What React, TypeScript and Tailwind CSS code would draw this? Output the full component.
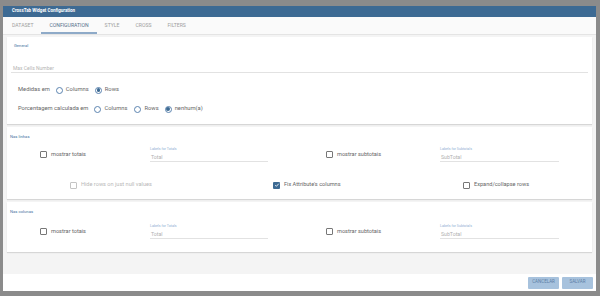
import React from "react";

const tabs = ["DATASET", "CONFIGURATION", "STYLE", "CROSS", "FILTERS"];

function Radio({ checked }: { checked?: boolean }) {
  return (
    <span className="flex h-[7px] w-[7px] shrink-0 items-center justify-center rounded-full border border-[#5b84b0] bg-white">
      {checked && <span className="h-[3.5px] w-[3.5px] rounded-full bg-[#3d6a93]" />}
    </span>
  );
}

function Check({ checked, disabled }: { checked?: boolean; disabled?: boolean }) {
  if (checked) {
    return (
      <span className="flex h-[7px] w-[7px] shrink-0 items-center justify-center rounded-[1px] bg-[#3d6a93]">
        <svg viewBox="0 0 10 10" className="h-[6px] w-[6px]">
          <path d="M2 5.2l2 2 4-4.4" fill="none" stroke="white" strokeWidth="1.4" />
        </svg>
      </span>
    );
  }
  return (
    <span
      className={`h-[7px] w-[7px] shrink-0 rounded-[1px] border bg-white ${
        disabled ? "border-[#c4c4c4]" : "border-[#777]"
      }`}
    />
  );
}

function CheckLabel({ label, checked, disabled }: { label: string; checked?: boolean; disabled?: boolean }) {
  return (
    <div className="flex h-[8px] items-center gap-[4px]">
      <Check checked={checked} disabled={disabled} />
      <span className={`text-[5.6px] leading-none ${disabled ? "text-[#b8b8b8]" : "text-[#666]"}`}>{label}</span>
    </div>
  );
}

function Field({ label, value, width }: { label: string; value: string; width: string }) {
  return (
    <div className={`flex flex-col ${width}`}>
      <span className="h-[4px] text-[3.6px] leading-[4px] text-[#8fb0d3]">{label}</span>
      <span className="mt-[3px] h-[8px] border-b border-[#e2e2e2] pl-[1px] text-[5.2px] leading-[7px] text-[#b0b0b0]">
        {value}
      </span>
    </div>
  );
}

function Title({ children }: { children: React.ReactNode }) {
  return <div className="h-[4px] pl-[3px] text-[4.2px] leading-[4px] text-[#4a76a3]">{children}</div>;
}

function TotalsRow() {
  return (
    <div className="grid grid-cols-[143px_176px_114px_1fr] items-center">
      <div className="pl-[33px]">
        <CheckLabel label="mostrar totais" />
      </div>
      <Field label="Labels for Totals" value="Total" width="w-[118px]" />
      <div>
        <CheckLabel label="mostrar subtotais" />
      </div>
      <Field label="Labels for Subtotals" value="SubTotal" width="w-[119px]" />
    </div>
  );
}

export default function App() {
  return (
    <div className="h-[296px] w-[600px] overflow-hidden bg-[#8b8b8b] pl-[3px] pt-[6px] font-[Roboto,'Liberation_Sans',sans-serif]">
      <div className="flex h-[285px] w-[593px] flex-col bg-white">
        <div className="flex h-[11px] items-center bg-[#3d6a93] pl-[9px] text-[4.5px] font-bold leading-none text-white">
          CrossTab Widget Configuration
        </div>

        <div className="flex h-[18px] border-b border-[#e4e4e4] bg-[#fafafa] pl-[1px]">
          {tabs.map((t) => (
            <div
              key={t}
              className={`flex items-center border-b-2 px-[8px] pt-[2px] text-[5.1px] leading-none ${
                t === "CONFIGURATION"
                  ? "border-[#8eaac8] text-[#55708a]"
                  : "border-transparent text-[#a0a0a0]"
              }`}
            >
              {t}
            </div>
          ))}
        </div>

        <div className="flex flex-1 flex-col gap-[3px] bg-[#f4f4f4] px-[4px] pt-[2px]">
          <div className="h-[87px] bg-white px-[4px] pt-[7px] shadow-[0_1px_1px_rgba(0,0,0,0.12)]">
            <Title>General</Title>
            <div className="mt-[16px] h-[9px] border-b border-[#e2e2e2] pl-[2px] text-[5px] leading-[8px] text-[#b5b5b5]">
              Max Cells Number
            </div>
            <div className="ml-[7px] mt-[13px] flex h-[8px] items-center text-[5.8px] leading-none text-[#666]">
              <span>Medidas em</span>
              <span className="ml-[6px]"><Radio /></span>
              <span className="ml-[3px]">Columns</span>
              <span className="ml-[6px]"><Radio checked /></span>
              <span className="ml-[3px]">Rows</span>
            </div>
            <div className="ml-[7px] mt-[11px] flex h-[8px] items-center text-[5.8px] leading-none text-[#666]">
              <span>Porcentagem calculada em</span>
              <span className="ml-[6px]"><Radio /></span>
              <span className="ml-[3px]">Columns</span>
              <span className="ml-[7px]"><Radio /></span>
              <span className="ml-[3px]">Rows</span>
              <span className="ml-[6px]"><Radio checked /></span>
              <span className="ml-[3px]">nenhum(a)</span>
            </div>
          </div>

          <div className="h-[72px] bg-white pt-[8px] shadow-[0_1px_1px_rgba(0,0,0,0.12)]">
            <Title>Nas linhas</Title>
            <div className="mt-[8px]">
              <TotalsRow />
            </div>
            <div className="mt-[19px] grid grid-cols-[203px_190px_1fr] pl-[63px]">
              <CheckLabel label="Hide rows on just null values" disabled />
              <CheckLabel label="Fix Attribute's columns" checked />
              <CheckLabel label="Expand/collapse rows" />
            </div>
          </div>

          <div className="h-[50px] bg-white pt-[8px] shadow-[0_1px_1px_rgba(0,0,0,0.12)]">
            <Title>Nas colunas</Title>
            <div className="mt-[10px]">
              <TotalsRow />
            </div>
          </div>
        </div>

        <div className="flex h-[17px] items-center justify-end gap-[3px] pr-[3px]">
          <button className="h-[12px] w-[31px] rounded-[1px] bg-[#a7c2dd] text-[4.5px] leading-none text-[#5d80a6]">
            CANCELAR
          </button>
          <button className="h-[12px] w-[31px] rounded-[1px] bg-[#a7c2dd] text-[4.5px] leading-none text-[#5d80a6]">
            SALVAR
          </button>
        </div>
      </div>
    </div>
  );
}
